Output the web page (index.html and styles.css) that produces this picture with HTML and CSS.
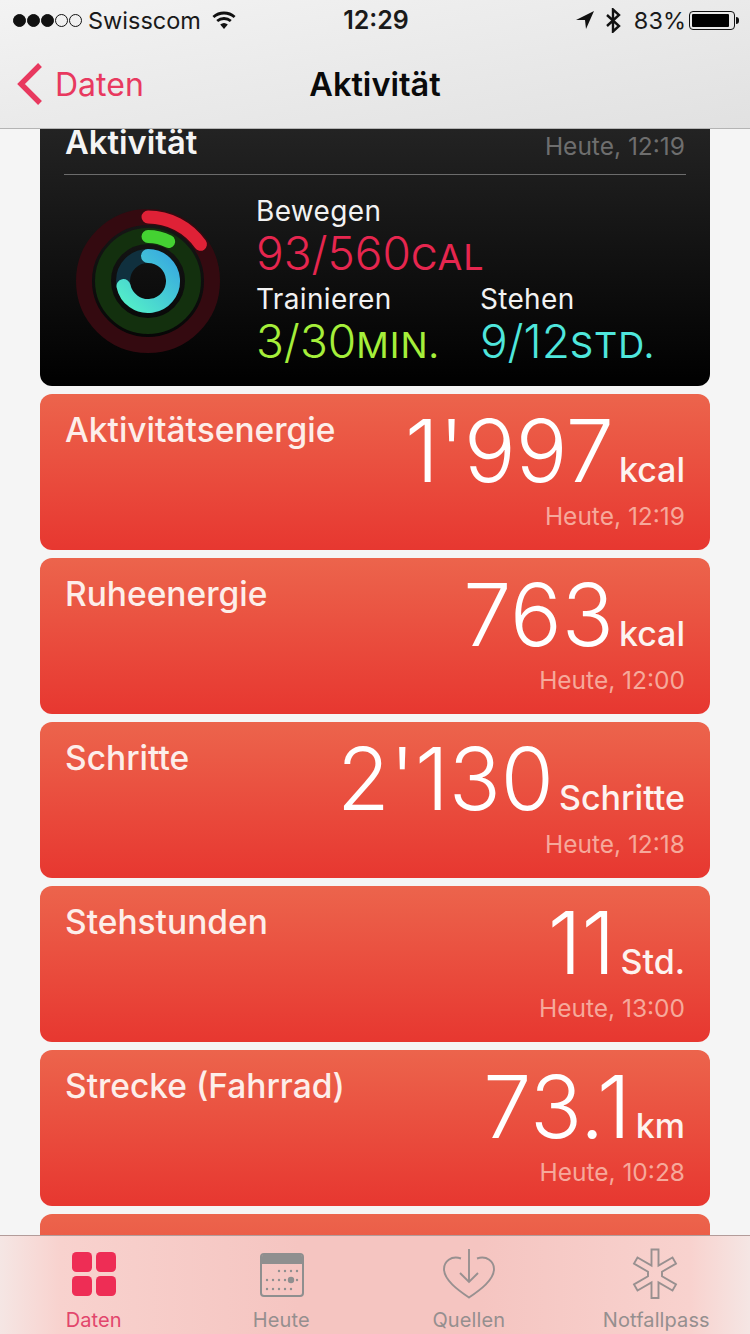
FILE: index.html
```html
<!DOCTYPE html>
<html lang="de">
<head>
<meta charset="utf-8">
<title>Aktivität</title>
<link rel="stylesheet" href="styles.css">
</head>
<body>
<div class="app">
  <header class="top">
    <div class="status">
      <div class="status-left">
        <span class="signal"><i class="on"></i><i class="on"></i><i class="on"></i><i></i><i></i></span>
        <span class="carrier">Swisscom</span>
        <svg class="wifi" width="26" height="20" viewBox="0 0 26 20"><path d="M13 19 L9.2 14.6 A6 6 0 0 1 16.8 14.6 Z" fill="#111"/><path d="M6.2 11 A10.5 10.5 0 0 1 19.8 11" fill="none" stroke="#111" stroke-width="2.8"/><path d="M2.4 7 A16 16 0 0 1 23.6 7" fill="none" stroke="#111" stroke-width="2.8"/></svg>
      </div>
      <div class="clock">12:29</div>
      <div class="status-right">
        <svg width="18" height="18" viewBox="0 0 18 18"><path d="M0 9 L18 0 L10 18 L9 9 Z" fill="#111"/></svg>
        <svg class="bt" width="17" height="25" viewBox="0 0 17 25"><path d="M2 7 L14 18 L8 23.5 V1.5 L14 7 L2 18" fill="none" stroke="#111" stroke-width="2.4"/></svg>
        <span class="pct">83%</span>
        <span class="battery"><span class="battery-fill"></span></span>
        <span class="nub"></span>
      </div>
    </div>
    <nav class="nav">
      <div class="back">
        <svg width="30" height="44" viewBox="0 0 30 44"><path d="M26 3 L7 22 L26 41" fill="none" stroke="#e8395f" stroke-width="5.4"/></svg>
        <span>Daten</span>
      </div>
      <div class="nav-title">Aktivität</div>
    </nav>
  </header>

  <main class="content">
    <section class="activity">
      <div class="activity-head">
        <h2>Aktivität</h2>
        <span class="time">Heute, 12:19</span>
      </div>
      <div class="activity-body">
        <svg class="rings" width="146" height="146" viewBox="0 0 146 146">
          <defs>
            <linearGradient id="blue" x1="1" y1="0" x2="0" y2="1">
              <stop offset="0" stop-color="#38a9e0"/>
              <stop offset="1" stop-color="#54efc8"/>
            </linearGradient>
          </defs>
          <g fill="none" stroke-linecap="round">
            <circle cx="73" cy="73" r="64" stroke="#340a10" stroke-width="16"/>
            <circle cx="73" cy="73" r="45" stroke="#13300e" stroke-width="16"/>
            <circle cx="73" cy="73" r="25" stroke="#10303e" stroke-width="14"/>
            <path d="M73 9 A64 64 0 0 1 125.4 36.3" stroke="#df2136" stroke-width="13"/>
            <path d="M73 28.5 A44.5 44.5 0 0 1 93.7 33.6" stroke="#44d232" stroke-width="13"/>
            <path d="M73 48 A25 25 0 1 1 48.5 78" stroke="url(#blue)" stroke-width="14"/>
          </g>
        </svg>
        <div class="metrics">
          <div class="metric">
            <div class="metric-label">Bewegen</div>
            <div class="metric-value red">93/560<small>CAL</small></div>
          </div>
          <div class="metric-row">
            <div class="metric">
              <div class="metric-label">Trainieren</div>
              <div class="metric-value green">3/30<small>MIN.</small></div>
            </div>
            <div class="metric">
              <div class="metric-label">Stehen</div>
              <div class="metric-value cyan">9/12<small>STD.</small></div>
            </div>
          </div>
        </div>
      </div>
    </section>

    <section class="card">
      <div class="card-title">Aktivitätsenergie</div>
      <div class="card-data">
        <div class="reading"><span class="num">1'997</span><span class="unit">kcal</span></div>
        <div class="time">Heute, 12:19</div>
      </div>
    </section>
    <section class="card">
      <div class="card-title">Ruheenergie</div>
      <div class="card-data">
        <div class="reading"><span class="num">763</span><span class="unit">kcal</span></div>
        <div class="time">Heute, 12:00</div>
      </div>
    </section>
    <section class="card">
      <div class="card-title">Schritte</div>
      <div class="card-data">
        <div class="reading"><span class="num">2'130</span><span class="unit">Schritte</span></div>
        <div class="time">Heute, 12:18</div>
      </div>
    </section>
    <section class="card">
      <div class="card-title">Stehstunden</div>
      <div class="card-data">
        <div class="reading"><span class="num">11</span><span class="unit">Std.</span></div>
        <div class="time">Heute, 13:00</div>
      </div>
    </section>
    <section class="card">
      <div class="card-title">Strecke (Fahrrad)</div>
      <div class="card-data">
        <div class="reading"><span class="num">73.1</span><span class="unit">km</span></div>
        <div class="time">Heute, 10:28</div>
      </div>
    </section>
    <section class="card"></section>
  </main>

  <footer class="tabs">
    <div class="tab active">
      <svg width="52" height="52" viewBox="0 0 52 52"><g fill="#ee2d55"><rect x="4" y="4" width="20" height="20" rx="4.5"/><rect x="28" y="4" width="20" height="20" rx="4.5"/><rect x="4" y="28" width="20" height="20" rx="4.5"/><rect x="28" y="28" width="20" height="20" rx="4.5"/></g></svg>
      <span>Daten</span>
    </div>
    <div class="tab">
      <svg width="52" height="52" viewBox="-1 0 52 52">
        <path d="M6 9 a3 3 0 0 1 3 -3 h34 a3 3 0 0 1 3 3 v7 h-40 z" fill="#8f8f8f"/>
        <rect x="5" y="6" width="42" height="42" rx="3" fill="none" stroke="#8f8f8f" stroke-width="2"/>
        <g fill="#8f8f8f">
          <circle cx="23" cy="23" r="1.2"/><circle cx="29" cy="23" r="1.2"/><circle cx="35" cy="23" r="1.2"/><circle cx="41" cy="23" r="1.2"/>
          <circle cx="11" cy="32" r="1.2"/><circle cx="17" cy="32" r="1.2"/><circle cx="23" cy="32" r="1.2"/><circle cx="29" cy="32" r="1.2"/><circle cx="35" cy="32" r="3.2"/><circle cx="41" cy="32" r="1.2"/>
          <circle cx="11" cy="41" r="1.2"/><circle cx="17" cy="41" r="1.2"/><circle cx="23" cy="41" r="1.2"/><circle cx="29" cy="41" r="1.2"/><circle cx="35" cy="41" r="1.2"/>
        </g>
      </svg>
      <span>Heute</span>
    </div>
    <div class="tab">
      <svg width="52" height="52" viewBox="0 0 52 52" fill="none" stroke="#989090" stroke-width="1.9">
        <path d="M18 10.5 C8 7 1 14 1 21 C1 32 15 42 26 49.5 C37 42 51 32 51 21 C51 14 44 7 34 10.5"/>
        <path d="M26 1 V34 M17 25 L26 34 L35 25"/>
      </svg>
      <span>Quellen</span>
    </div>
    <div class="tab">
      <svg width="52" height="52" viewBox="1 0 52 52"><path d="M22.5 1.5 H29.5 V17.6 L43.5 9.5 L47 15.6 L33 23.7 V28.3 L47 36.4 L43.5 42.5 L29.5 34.4 V50 H22.5 V34.4 L8.5 42.5 L5 36.4 L19 28.3 V23.7 L5 15.6 L8.5 9.5 L22.5 17.6 Z" fill="none" stroke="#989090" stroke-width="1.9"/></svg>
      <span>Notfallpass</span>
    </div>
  </footer>
</div>
</body>
</html>
```
FILE: styles.css
```css
* { box-sizing: border-box; }
html, body { margin: 0; padding: 0; }
body { font-family: Inter, "Liberation Sans", sans-serif; background: #f5f5f5; }
.app { width: 750px; height: 1334px; display: flex; flex-direction: column; overflow: hidden; }

.top { height: 129px; flex: none; background: linear-gradient(170deg, #f3f3f3, #e1e1e1); border-bottom: 1px solid #b4b4b4; position: relative; z-index: 1; }
.status { height: 40px; display: grid; grid-template-columns: 1fr auto 1fr; align-items: center; padding: 0 11px 0 13px; color: #1a1a1a; font-size: 23.5px; }
.status-left { display: flex; align-items: center; gap: 6px; }
.signal { display: flex; gap: 1px; }
.signal i { width: 13px; height: 13px; border-radius: 50%; border: 1px solid #111; }
.signal i.on { background: #111; }
.wifi { margin-left: 4px; }
.clock { font-weight: 600; font-size: 25px; }
.status-right { display: flex; align-items: center; justify-content: flex-end; }
.bt { margin-left: 11px; }
.pct { margin-left: 12px; }
.battery { width: 46px; height: 19px; border: 1px solid #111; border-radius: 4px; padding: 2px; margin-left: 3px; display: flex; }
.battery-fill { width: 37px; background: #000; border-radius: 1px; }
.nub { width: 3px; height: 7px; background: #111; border-radius: 0 3px 3px 0; margin-left: 1px; }

.nav { height: 88px; display: grid; grid-template-columns: 1fr auto 1fr; align-items: center; }
.back { display: flex; align-items: center; gap: 11px; padding-left: 14px; color: #e8395f; font-size: 32px; }
.nav-title { font-size: 32.5px; font-weight: 600; color: #0a0a0a; }

.content { flex: 1; min-height: 0; overflow: hidden; padding: 0 40px; display: flex; flex-direction: column; gap: 8px; }

.activity { flex: none; height: 257px; background: linear-gradient(#232323, #000); border-radius: 0 0 12px 12px; padding: 0 24px; color: #fff; }
.activity-head { height: 46px; display: flex; justify-content: space-between; align-items: flex-start; border-bottom: 1px solid #6c6c6c; padding: 0 1px; }
.activity-head h2 { margin: -6px 0 0; font-size: 32.7px; line-height: 38px; font-weight: 600; color: #f4f4f4; }
.activity .time { color: #6e6e6e; line-height: 30px; margin-top: 2px; }
.activity-body { display: flex; gap: 35px; padding-top: 4px; align-items: flex-start; margin-left: 11px; }
.rings { flex: none; margin-top: 29px; }
.metrics { display: flex; flex-direction: column; padding-top: 15px; }
.metric-row { display: flex; gap: 40px; }
.metric-label { font-size: 28px; letter-spacing: .35px; line-height: 34px; color: #f2f2f2; }
.metric-value { font-size: 46px; line-height: 50px; font-weight: 300; white-space: nowrap; }
.metric-value small { font-size: 36px; font-weight: 400; letter-spacing: 1px; }
.red { color: #e6264f; }
.green { color: #a5ef3a; }
.cyan { color: #4fe6dc; }

.card { flex: none; height: 156px; border-radius: 12px; background: linear-gradient(#ec644c, #e73730); padding: 14px 25px 0; display: flex; justify-content: space-between; color: #fff; }
.card-title { font-size: 33.5px; font-weight: 500; line-height: 38px; margin-top: 3px; color: #fdeeea; white-space: nowrap; }
.card-data { display: flex; flex-direction: column; align-items: flex-end; }
.reading { display: flex; align-items: baseline; gap: 5px; height: 86px; line-height: 86px; }
.num { font-size: 86px; font-weight: 300; }
.unit { font-size: 34px; font-weight: 500; color: #fdf3f0; }
.time { font-size: 24.5px; line-height: 30px; white-space: nowrap; }
.card-data .time { margin-top: 7px; color: #f6a99b; }

.tabs { height: 99px; flex: none; background: linear-gradient(90deg, #f5e6e4, #f8d2ce 60px, #f5c5c1 300px, #f5c5c1 480px, #f8d2ce 690px, #f5e6e4); border-top: 1px solid #b39c9a; display: grid; grid-template-columns: repeat(4, 1fr); position: relative; z-index: 1; }
.tab { display: flex; flex-direction: column; align-items: center; padding-top: 12px; color: #958f8f; font-size: 20px; letter-spacing: .1px; line-height: 26px; }
.tab svg { margin-bottom: 7px; }
.tab.active { color: #e2466c; }
```
